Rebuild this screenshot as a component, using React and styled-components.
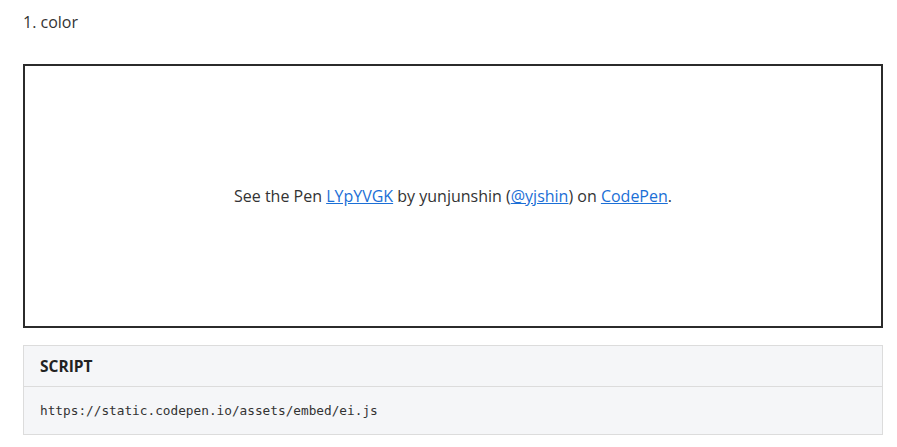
import React from 'react'
import styled, {createGlobalStyle} from 'styled-components'

const GlobalStyle = createGlobalStyle`
  body {
    margin: 0;
    background: #fff;
    font-family: "Open Sans", "Liberation Sans", sans-serif;
    color: #333;
  }
`

const Page = styled.div`
  width: 860px;
  padding: 10px 14px 0 23px;
`

const ListItem = styled.p`
  margin: 0;
  font-size: 16px;
  line-height: 24px;
  color: #333;
`

const PenFrame = styled.div`
  margin-top: 30px;
  height: 260px;
  border: 2px solid #2b2b2b;
  display: flex;
  align-items: center;
  justify-content: center;
  font-size: 16px;
  color: #333;
`

const Link = styled.a`
  color: #1b6fd6;
  text-decoration: underline;
`

const CodeBox = styled.div`
  margin-top: 17px;
  border: 1px solid #dcdcdc;
  background: #f5f6f8;
`

const CodeHeader = styled.div`
  height: 40px;
  display: flex;
  align-items: center;
  padding: 0 16px;
  border-bottom: 1px solid #dcdcdc;
  font-size: 15.5px;
  font-weight: 700;
  color: #222;
`

const CodeBody = styled.pre`
  margin: 0;
  height: 47px;
  display: flex;
  align-items: center;
  padding: 0 16px;
  font-family: "DejaVu Sans Mono", "Liberation Mono", monospace;
  font-size: 12.75px;
  color: #333;
`

export default function App() {
  return (
    <Page>
      <GlobalStyle />
      <ListItem>1. color</ListItem>
      <PenFrame>
        <span>
          See the Pen <Link href="#">LYpYVGK</Link> by yunjunshin (<Link href="#">@yjshin</Link>) on <Link href="#">CodePen</Link>.
        </span>
      </PenFrame>
      <CodeBox>
        <CodeHeader>SCRIPT</CodeHeader>
        <CodeBody>https://static.codepen.io/assets/embed/ei.js</CodeBody>
      </CodeBox>
    </Page>
  )
}
